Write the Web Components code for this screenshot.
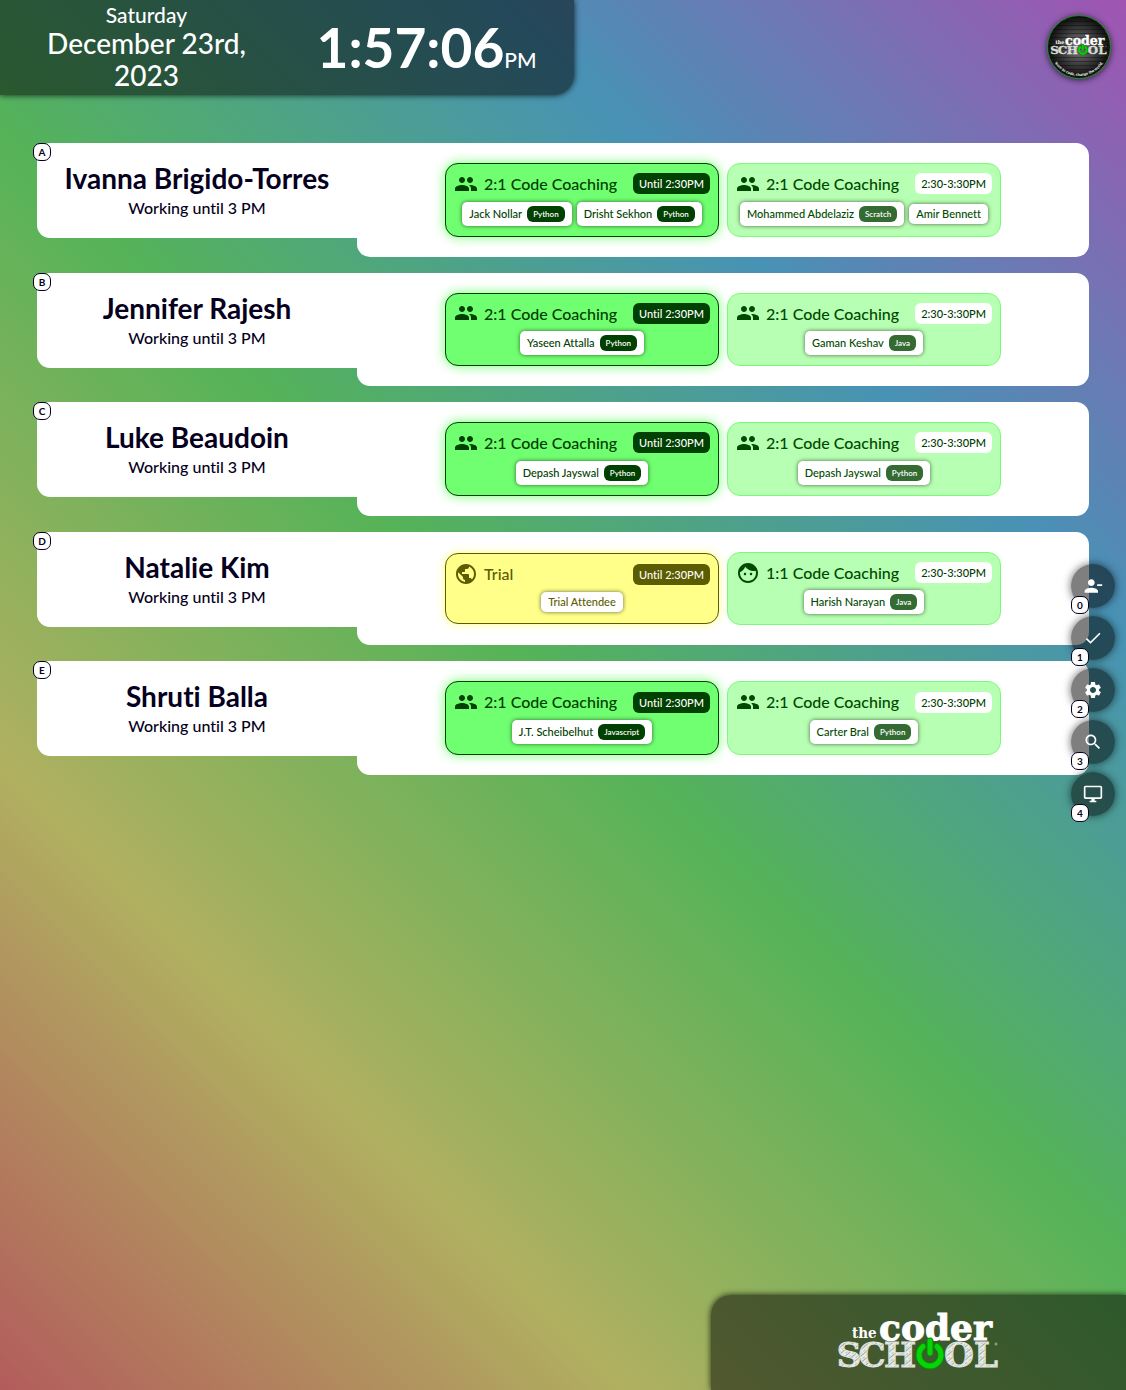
<!DOCTYPE html>
<html lang="en">
<head>
<meta charset="utf-8">
<title>Coach board</title>
<style>
  html, body { margin: 0; min-height: 100%; }
  body {
    min-height: 100vh;
    font-family: Lato, "Open Sans", sans-serif;
    font-weight: 500;
    font-variant-ligatures: none;
    line-height: 1.6;
    color: #050020;
    background: linear-gradient(45deg, #b35c5c, #b0b060, #55b358, #4892b5, #a154b3) fixed;
  }
</style>
</head>
<body>
<school-board></school-board>

<script>
const ICONS = {
  people: 'M16 11c1.66 0 2.99-1.34 2.99-3S17.66 5 16 5c-1.66 0-3 1.34-3 3s1.34 3 3 3zm-8 0c1.66 0 2.99-1.34 2.99-3S9.66 5 8 5C6.34 5 5 6.34 5 8s1.34 3 3 3zm0 2c-2.33 0-7 1.17-7 3.5V19h14v-2.5c0-2.33-4.67-3.5-7-3.5zm8 0c-.29 0-.62.02-.97.05 1.16.84 1.97 1.97 1.97 3.45V19h6v-2.5c0-2.33-4.67-3.5-7-3.5z',
  globe: 'M12 2C6.48 2 2 6.48 2 12s4.48 10 10 10 10-4.48 10-10S17.52 2 12 2zm-1 17.93c-3.95-.49-7-3.85-7-7.93 0-.62.08-1.21.21-1.79L9 15v1c0 1.1.9 2 2 2v1.93zm6.9-2.54c-.26-.81-1-1.39-1.9-1.39h-1v-3c0-.55-.45-1-1-1H8v-2h2c.55 0 1-.45 1-1V7h2c1.1 0 2-.9 2-2v-.41c2.93 1.19 5 4.06 5 7.41 0 2.08-.8 3.97-2.1 5.39z',
  face: 'M9 11.75c-.69 0-1.25.56-1.25 1.25s.56 1.25 1.25 1.25 1.25-.56 1.25-1.25-.56-1.25-1.25-1.25zm6 0c-.69 0-1.25.56-1.25 1.25s.56 1.25 1.25 1.25 1.25-.56 1.25-1.25-.56-1.25-1.25-1.25zM12 2C6.48 2 2 6.48 2 12s4.48 10 10 10 10-4.48 10-10S17.52 2 12 2zm0 18c-4.41 0-8-3.59-8-8 0-.29.02-.58.05-.86 2.36-1.05 4.23-2.98 5.21-5.37C11.07 8.33 14.05 10 17.42 10c.78 0 1.53-.09 2.25-.26.21.71.33 1.47.33 2.26 0 4.41-3.59 8-8 8z',
  remove: 'M14 8c0-2.21-1.79-4-4-4S6 5.79 6 8s1.79 4 4 4 4-1.79 4-4zm3 2v2h6v-2h-6zM2 18v2h16v-2c0-2.66-5.33-4-8-4s-8 1.34-8 4z',
  check: 'M9 16.17 4.83 12l-1.42 1.41L9 19 21 7l-1.41-1.41z',
  gear: 'M19.14 12.94c.04-.3.06-.61.06-.94 0-.32-.02-.64-.07-.94l2.03-1.58c.18-.14.23-.41.12-.61l-1.92-3.32c-.12-.22-.37-.29-.59-.22l-2.39.96c-.5-.38-1.03-.7-1.62-.94l-.36-2.54c-.04-.24-.24-.41-.48-.41h-3.84c-.24 0-.43.17-.47.41l-.36 2.54c-.59.24-1.13.57-1.62.94l-2.39-.96c-.22-.08-.47 0-.59.22L2.74 8.87c-.12.21-.08.47.12.61l2.03 1.58c-.05.3-.09.63-.09.94s.02.64.07.94l-2.03 1.58c-.18.14-.23.41-.12.61l1.92 3.32c.12.22.37.29.59.22l2.39-.96c.5.38 1.03.7 1.62.94l.36 2.54c.05.24.24.41.48.41h3.84c.24 0 .44-.17.47-.41l.36-2.54c.59-.24 1.13-.56 1.62-.94l2.39.96c.22.08.47 0 .59-.22l1.92-3.32c.12-.22.07-.47-.12-.61l-2.01-1.58zM12 15.6c-1.98 0-3.6-1.62-3.6-3.6s1.62-3.6 3.6-3.6 3.6 1.62 3.6 3.6-1.62 3.6-3.6 3.6z',
  search: 'M15.5 14h-.79l-.28-.27C15.41 12.59 16 11.11 16 9.5 16 5.91 13.09 3 9.5 3S3 5.91 3 9.5 5.91 16 9.5 16c1.61 0 3.09-.59 4.23-1.57l.27.28v.79l5 4.99L20.49 19l-4.99-5zm-6 0C7.01 14 5 11.99 5 9.5S7.01 5 9.5 5 14 7.01 14 9.5 11.99 14 9.5 14z',
  screen: 'M21 2H3c-1.1 0-2 .9-2 2v12c0 1.1.9 2 2 2h7v2H8v2h8v-2h-2v-2h7c1.1 0 2-.9 2-2V4c0-1.1-.9-2-2-2zm0 14H3V4h18v12z'
};

class BaseElement extends HTMLElement {
  constructor() {
    super();
    this.attachShadow({ mode: 'open' });
  }
  connectedCallback() {
    this.shadowRoot.innerHTML = this.render();
  }
}

customElements.define('glyph-icon', class extends BaseElement {
  render() {
    return `<style>
      :host { display: block; flex: none; width: var(--icon-size, 24px); height: var(--icon-size, 24px); }
      svg { display: block; width: 100%; height: 100%; fill: currentColor; }
    </style><svg viewBox="0 0 24 24" aria-hidden="true"><path d="${ICONS[this.getAttribute('name')]}"/></svg>`;
  }
});

customElements.define('key-badge', class extends BaseElement {
  render() {
    return `<style>
      :host { display: flex; align-items: center; justify-content: center; box-sizing: border-box;
        width: 18px; height: 18px; border: 1px solid #050020; border-radius: 7px;
        background: #fff; color: #050020; font-size: 10px; font-weight: 700; line-height: 16px; }
    </style><slot></slot>`;
  }
});

customElements.define('coder-logo', class extends BaseElement {
  render() {
    return `<style>
      :host { display: block; }
      svg { display: block; width: 100%; height: auto; overflow: visible; }
      .coder { font: 700 36px "DejaVu Serif", serif; fill: #fff; stroke: #fff; stroke-width: 1; }
      .the { font: 700 15px "DejaVu Serif Condensed", "DejaVu Serif", serif; fill: #fff; }
      .school { font: 700 34px "DejaVu Serif", serif; fill: url(#chalk); stroke: #dfe2dd; stroke-width: 1; text-anchor: middle; }
    </style>
    <svg viewBox="0 0 160 56" role="img" aria-label="the coder school">
      <defs>
        <pattern id="chalk" width="5" height="5" patternUnits="userSpaceOnUse" patternTransform="rotate(-40)">
          <rect width="5" height="5" fill="#e9ebe8"/>
          <rect width="5" height="1" fill="#a4aba0"/>
          <rect y="3" width="3" height="1" fill="#c0c5bc"/>
        </pattern>
      </defs>
      <text class="the" x="13" y="23">the</text>
      <text class="coder" x="40" y="25">coder</text>
      <text class="school" y="52"><tspan x="10">S</tspan><tspan x="33">C</tspan><tspan x="61">H</tspan><tspan x="120">O</tspan><tspan x="147">L</tspan></text>
      <g fill="none" stroke-linecap="round">
        <path d="M84 31.500a11 11 0 1 0 14 0M91 26v12" stroke="#078a07" stroke-width="7"/>
        <path d="M84 31.500a11 11 0 1 0 14 0M91 26v12" stroke="#06d406" stroke-width="5"/>
      </g>
      <circle cx="157" cy="29" r="1" fill="none" stroke="#aab3a4"/>
    </svg>`;
  }
});

customElements.define('round-logo', class extends BaseElement {
  render() {
    return `<style>
      :host { display: block; width: 64px; height: 64px; border-radius: 50%; box-sizing: border-box;
        border: 1px solid #118a1c; box-shadow: 0 1px 6px rgba(0,0,0,.7);
        background: repeating-linear-gradient(0deg, rgba(0,0,0,.35) 0 1px, transparent 1px 4px),
          radial-gradient(circle at 50% 50%, #808080 0, #454545 35%, #161616 65%, #0b0b0b); }
      .stack { display: grid; height: 100%; }
      .stack > * { grid-area: 1 / 1; }
      coder-logo { width: 56px; place-self: center; padding-bottom: 2px; }
      svg { width: 62px; height: 62px; }
      text { font: 700 4px Lato, sans-serif; fill: #fff; }
    </style>
    <div class="stack">
      <coder-logo></coder-logo>
      <svg viewBox="0 0 62 62" aria-hidden="true">
        <path id="arc" d="M3 38.500A29 29 0 0 0 59 38.500" fill="none"/>
        <text text-anchor="middle"><textPath href="#arc" startOffset="50%">learn to code. change the world.</textPath></text>
      </svg>
    </div>`;
  }
});

customElements.define('clock-panel', class extends BaseElement {
  render() {
    return `<style>
      :host { display: flex; align-items: center; box-sizing: border-box; width: 51vw; height: 95px; padding-bottom: 2px;
        border-radius: 0 0 20px 0; background: rgba(0,0,0,.5); color: #fff;
        box-shadow: 0 0 6px rgba(0,0,0,.8); }
      .date { flex: 0 0 51%; box-sizing: border-box; display: flex; flex-direction: column; align-items: center;
        text-align: center; padding: 0 32px; }
      .day { font-size: 21px; line-height: 24px; }
      .full { font-size: 28px; line-height: 32px; }
      .time { flex: 1; display: flex; align-items: baseline; justify-content: center; padding-right: 14px; }
      .digits { font-size: 55px; font-weight: 700; line-height: 64px; }
      .half { font-size: 21px; }
    </style>
    <div class="date"><span class="day">Saturday</span><span class="full">December 23rd, 2023</span></div>
    <div class="time"><span class="digits">1:57:06</span><span class="half">PM</span></div>`;
  }
});

customElements.define('student-chip', class extends BaseElement {
  render() {
    const tag = this.getAttribute('tag');
    return `<style>
      :host { display: flex; align-items: center; gap: 5px; padding: 4px 7px; border-radius: 5px;
        background: #fff; box-shadow: 0 0 4px rgba(0,0,0,.6); font-size: 11px; line-height: 12px; white-space: nowrap; }
      .tag { padding: 0 6px; border-radius: 6px; background: var(--tag); color: #fff; font-size: 8px; font-weight: 600; line-height: 16px; }
    </style><slot></slot>${tag ? `<span class="tag">${tag}</span>` : ''}`;
  }
});

customElements.define('session-card', class extends BaseElement {
  render() {
    return `<style>
      :host { display: block; box-sizing: border-box; flex: 0 1 274px; padding: 7px 8px 10px;
        border: 1px solid var(--line); border-radius: 13px; background: var(--fill); color: var(--ink); }
      :host([kind="now"]) { --ink: #004000; --line: #004000; --fill: #70ff70; --tag: #004000; --pill: #004000; --pill-ink: #fff;
        box-shadow: 0 0 12px #70ff70; }
      :host([kind="next"]) { --ink: #004a00; --line: #79fb79; --fill: #b7ffb2; --tag: #336b33; --pill: #fff; --pill-ink: #003c00; }
      :host([kind="trial"]) { --ink: #5c5c00; --line: #5c5c00; --fill: #ffff8a; --tag: #5c5c00; --pill: #5c5c00; --pill-ink: #fff;
        box-shadow: 0 0 10px #ffff8a; }
      header { display: flex; align-items: center; gap: 6px; }
      h3 { flex: 1; margin: 0; font-size: 16px; font-weight: 500; white-space: nowrap; }
      time { padding: 0 6px; border-radius: 6px; background: var(--pill); color: var(--pill-ink);
        font-size: 11px; line-height: 21px; white-space: nowrap; }
      .students { display: flex; align-items: center; justify-content: center; gap: 5px; min-height: 21px; margin-top: 5px; }
    </style>
    <header><glyph-icon name="${this.getAttribute('icon')}"></glyph-icon><h3>${this.getAttribute('label')}</h3><time>${this.getAttribute('when')}</time></header>
    <div class="students"><slot></slot></div>`;
  }
});

customElements.define('coach-row', class extends BaseElement {
  render() {
    return `<style>
      :host { display: flex; align-items: flex-start; position: relative; }
      .coach { flex: 0 0 320px; height: 95px; box-sizing: border-box; padding-top: 19px; text-align: center;
        background: #fff; border-radius: 13px 0 0 13px; }
      h2 { margin: 0; font-size: 28px; line-height: 33px; font-weight: 700; white-space: nowrap; }
      p { margin: 0; font-size: 16px; line-height: 26px; }
      .sessions { flex: 1; display: flex; align-items: center; justify-content: center; gap: 8px; padding: 20px;
        background: #fff; border-radius: 0 13px 13px 13px; }
      key-badge { position: absolute; left: -4px; top: 0; }
    </style>
    <section class="coach"><h2>${this.getAttribute('name')}</h2><p>${this.getAttribute('status')}</p></section>
    <div class="sessions"><slot></slot></div>
    <key-badge>${this.getAttribute('key')}</key-badge>`;
  }
});

customElements.define('tool-button', class extends BaseElement {
  render() {
    return `<style>
      :host { display: block; position: relative; --icon-size: 20px; }
      button { display: flex; align-items: center; justify-content: center; width: 44px; height: 44px; padding: 0;
        border: 0; border-radius: 50%; background: rgba(0,0,0,.5); color: #fff; box-shadow: 0 0 8px rgba(0,0,0,.6); }
      key-badge { position: absolute; left: 0; bottom: -6px; }
    </style>
    <button type="button" aria-label="${this.getAttribute('label')}"><glyph-icon name="${this.getAttribute('icon')}"></glyph-icon></button>
    <key-badge>${this.getAttribute('key')}</key-badge>`;
  }
});

const NOW = 'Until 2:30PM', NEXT = '2:30-3:30PM', PAIR = '2:1 Code Coaching';
const COACHES = [
  ['A', 'Ivanna Brigido-Torres', ['now', 'people', PAIR, NOW, ['Jack Nollar', 'Python'], ['Drisht Sekhon', 'Python']],
    ['next', 'people', PAIR, NEXT, ['Mohammed Abdelaziz', 'Scratch'], ['Amir Bennett']]],
  ['B', 'Jennifer Rajesh', ['now', 'people', PAIR, NOW, ['Yaseen Attalla', 'Python']],
    ['next', 'people', PAIR, NEXT, ['Gaman Keshav', 'Java']]],
  ['C', 'Luke Beaudoin', ['now', 'people', PAIR, NOW, ['Depash Jayswal', 'Python']],
    ['next', 'people', PAIR, NEXT, ['Depash Jayswal', 'Python']]],
  ['D', 'Natalie Kim', ['trial', 'globe', 'Trial', NOW, ['Trial Attendee']],
    ['next', 'face', '1:1 Code Coaching', NEXT, ['Harish Narayan', 'Java']]],
  ['E', 'Shruti Balla', ['now', 'people', PAIR, NOW, ['J.T. Scheibelhut', 'Javascript']],
    ['next', 'people', PAIR, NEXT, ['Carter Bral', 'Python']]]
];
const TOOLS = [['remove', 'Remove coach'], ['check', 'Check in'], ['gear', 'Settings'], ['search', 'Search'], ['screen', 'Display']];

const chip = ([name, tag]) => `<student-chip${tag ? ` tag="${tag}"` : ''}>${name}</student-chip>`;
const card = ([kind, icon, label, when, ...students]) =>
  `<session-card kind="${kind}" icon="${icon}" label="${label}" when="${when}">${students.map(chip).join('')}</session-card>`;
const row = ([key, name, ...cards]) =>
  `<coach-row key="${key}" name="${name}" status="Working until 3 PM">${cards.map(card).join('')}</coach-row>`;

customElements.define('school-board', class extends BaseElement {
  render() {
    return `<style>
      :host { display: flex; flex-direction: column; min-height: 100vh; }
      .top { display: flex; justify-content: space-between; align-items: flex-start; padding-right: 15px; }
      round-logo { margin-top: 15px; }
      main { flex: 1; display: flex; flex-direction: column; gap: 16px; padding: 48px 37px; }
      footer { align-self: flex-end; display: flex; align-items: center; justify-content: center; width: 415px; height: 95px;
        border-radius: 20px 0 0 0; background: rgba(0,0,0,.5); box-shadow: 0 0 6px rgba(0,0,0,.8); }
      footer coder-logo { width: 160px; }
      nav { position: fixed; right: 11px; top: 50%; transform: translateY(-50%); display: flex; flex-direction: column;
        gap: 8px; padding-bottom: 10px; }
    </style>
    <div class="top"><clock-panel></clock-panel><round-logo></round-logo></div>
    <main>${COACHES.map(row).join('')}</main>
    <footer><coder-logo></coder-logo></footer>
    <nav aria-label="Board tools">${TOOLS.map(([icon, label], i) =>
      `<tool-button key="${i}" icon="${icon}" label="${label}"></tool-button>`).join('')}</nav>`;
  }
});
</script>
</body>
</html>
